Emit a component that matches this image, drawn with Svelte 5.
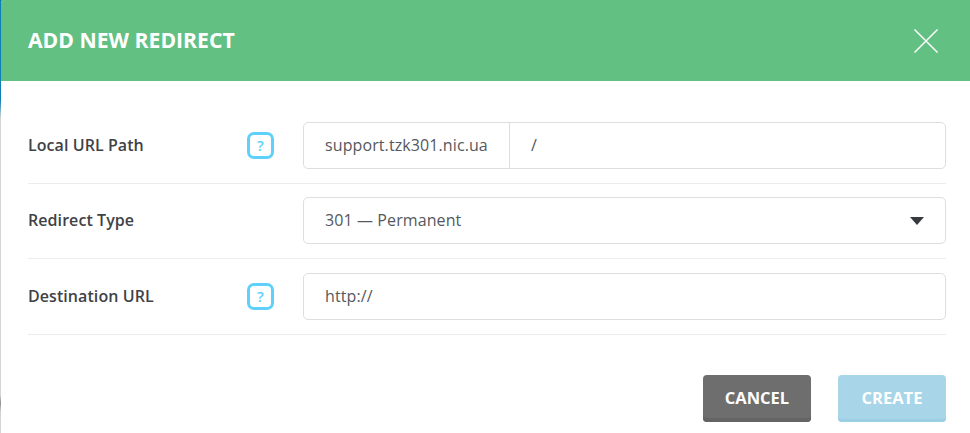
<script>
  const hint = 'What is this?';
</script>

<div class="page">
  <div class="modal">
    <header>
      <h2>ADD NEW REDIRECT</h2>
      <button class="close" aria-label="Close">
        <svg width="26" height="26" viewBox="0 0 26 26">
          <path d="M1.5 1.5 L24.5 24.5 M24.5 1.5 L1.5 24.5" stroke="#fff" stroke-width="1.5" fill="none" />
        </svg>
      </button>
    </header>

    <div class="body">
      <div class="row">
        <span class="label">Local URL Path</span>
        <span class="help" title={hint}>?</span>
        <div class="field split">
          <span class="domain">support.tzk301.nic.ua</span>
          <span class="path">/</span>
        </div>
      </div>
      <div class="row">
        <span class="label">Redirect Type</span>
        <span class="nohelp"></span>
        <div class="field select">
          <span class="value">301 — Permanent</span>
          <span class="arrow"></span>
        </div>
      </div>
      <div class="row">
        <span class="label">Destination URL</span>
        <span class="help" title={hint}>?</span>
        <div class="field">
          <span class="value">http://</span>
        </div>
      </div>
    </div>

    <footer>
      <button class="btn cancel">CANCEL</button>
      <button class="btn create">CREATE</button>
    </footer>
  </div>
</div>

<style>
  :global(body) {
    margin: 0;
    background: #fff;
  }

  .page {
    width: 970px;
    height: 433px;
    overflow: hidden;
    background: linear-gradient(#0d7fb5 0, #0d7fb5 100px, #d4d4d4 118px, #d4d4d4 395px, #8f8f8f 403px, #d4d4d4 412px, #d4d4d4 100%);
    font-family: "Open Sans", sans-serif;
  }

  .modal {
    margin-left: 1px;
    height: 433px;
    background: #fff;
    border-top-left-radius: 3px;
    overflow: hidden;
  }

  header {
    height: 81px;
    background: #62c083;
    display: flex;
    align-items: center;
    justify-content: space-between;
    padding: 0 31px 0 27px;
  }

  h2 {
    margin: 0;
    padding-bottom: 2px;
    color: #fff;
    font-size: 21.2px;
    font-weight: 700;
  }

  .close {
    background: none;
    border: 0;
    padding: 0;
    display: flex;
  }

  .body {
    padding: 27px 24px 0 27px;
  }

  .row {
    display: flex;
    align-items: center;
    padding: 14px 0;
    border-bottom: 1px solid #ececec;
  }

  .row:nth-child(2) {
    padding-top: 13px;
  }

  .label {
    width: 219px;
    padding-bottom: 2px;
    font-size: 16px;
    font-weight: 600;
    letter-spacing: 0.07px;
    color: #3f4246;
  }

  .help,
  .nohelp {
    width: 27px;
    height: 27px;
    margin-right: 29px;
    margin-bottom: 1px;
    box-sizing: border-box;
  }

  .help {
    border: 3px solid #5ed0fa;
    border-radius: 7px;
    color: #5ed0fa;
    font-size: 15px;
    font-weight: 600;
    line-height: 20px;
    text-align: center;
  }

  .field {
    flex: 1;
    height: 47px;
    box-sizing: border-box;
    border: 1px solid #dedede;
    border-radius: 5px;
    display: flex;
    align-items: center;
    padding: 0 21px;
    color: #55585c;
    font-size: 16px;
    letter-spacing: 0.1px;
  }

  .value,
  .path {
    padding-bottom: 2px;
  }

  .split {
    padding: 0;
  }

  .domain {
    height: 100%;
    box-sizing: border-box;
    display: flex;
    align-items: center;
    padding: 0 21px 2px;
    border-right: 1px solid #dedede;
  }

  .path {
    padding-left: 21px;
  }

  .select {
    justify-content: space-between;
    padding-right: 21px;
  }

  .arrow {
    width: 0;
    height: 0;
    border-left: 7px solid transparent;
    border-right: 7px solid transparent;
    border-top: 8px solid #36393d;
  }

  footer {
    display: flex;
    justify-content: flex-end;
    gap: 27px;
    padding: 40px 24px 0 0;
  }

  .btn {
    width: 108px;
    height: 47px;
    border: 0;
    border-radius: 4px;
    padding: 0 0 2px;
    color: #fff;
    font-family: inherit;
    font-size: 16.5px;
    font-weight: 700;
  }

  .cancel {
    background: #6d6e6d;
    box-shadow: inset 0 -4px 0 #636463;
  }

  .create {
    background: #a8d5e8;
    box-shadow: inset 0 -3px 0 #9ccfe4;
  }
</style>
